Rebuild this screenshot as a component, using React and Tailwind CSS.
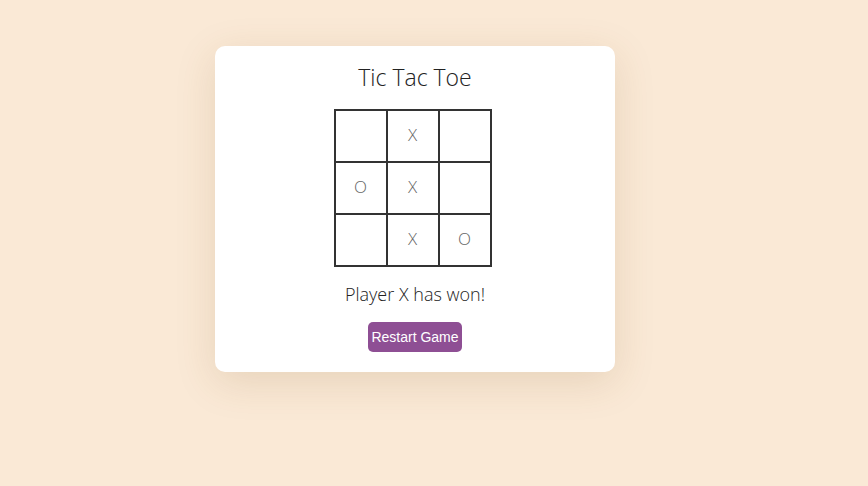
const board = ['', 'X', '', 'O', 'X', '', '', 'X', 'O'];

const App = () => {
  return (
    <div className="min-h-screen w-full bg-[#fae9d6] pt-[46px]" style={{ minHeight: 486 }}>
      <div className="ml-[215px] w-[400px] rounded-[10px] bg-white pt-[15px] pb-[20px] flex flex-col items-center shadow-[0_10px_40px_rgba(120,80,30,0.15)]">
        <h1 className="text-[23px] leading-[32px] font-light text-[#222] [font-family:'Open_Sans',sans-serif]">
          Tic Tac Toe
        </h1>

        <div className="mt-[16px] mr-[5px] grid grid-cols-3 gap-[2px] p-[2px] bg-[#333]">
          {board.map((v, i) => (
            <div
              key={i}
              className="w-[50px] h-[50px] pb-[3px] bg-white flex items-center justify-center text-[17px] font-light text-[#666] [font-family:'Open_Sans',sans-serif]"
            >
              {v}
            </div>
          ))}
        </div>

        <p className="mt-[15px] text-[18px] leading-[24px] font-light text-[#222] [font-family:'Open_Sans',sans-serif]">
          Player X has won!
        </p>

        <button
          type="button"
          className="mt-[16px] h-[30px] w-[94px] rounded-[5px] bg-[#8e4f94] text-white text-[14px] [font-family:'Liberation_Sans',Arial,sans-serif]"
        >
          Restart Game
        </button>
      </div>
    </div>
  );
};

export default App;
